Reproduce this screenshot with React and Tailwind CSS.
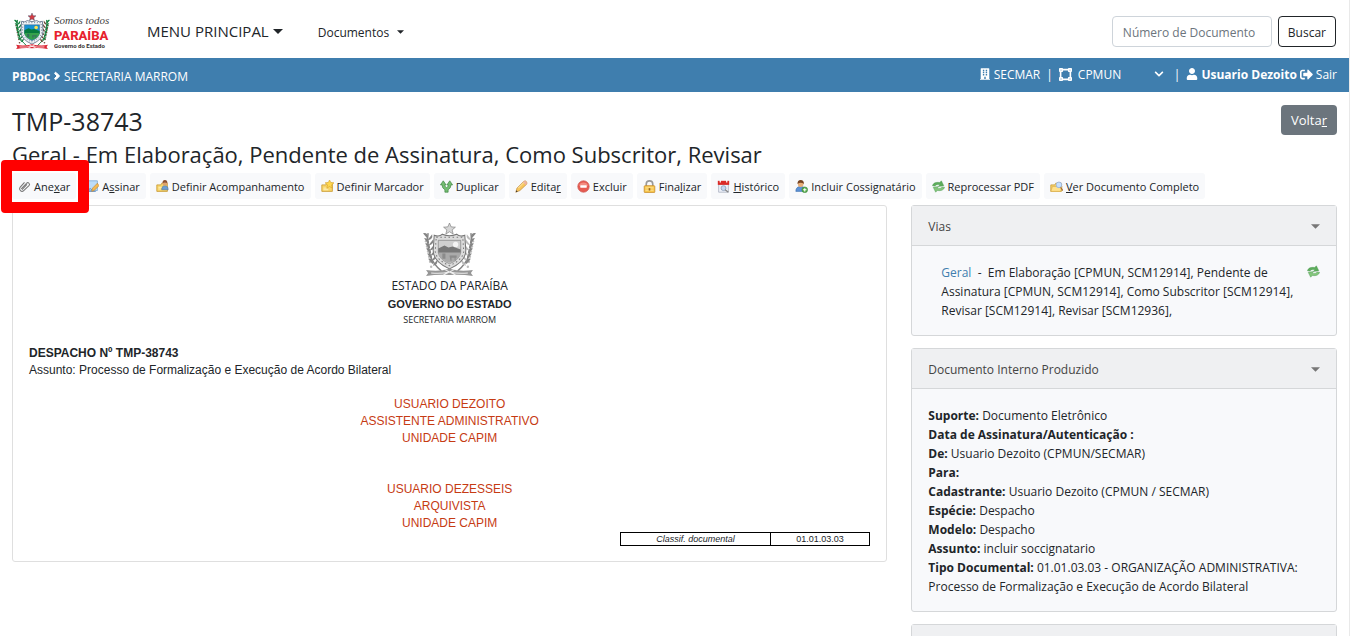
import React from 'react';
import { FaAngleRight, FaBuilding, FaChevronDown, FaSignOutAlt, FaUser, FaVectorSquare } from 'react-icons/fa';

// ---------- Coat of arms ----------
const Crest = ({ mono, className }) => {
  const c = mono
    ? { leaf: '#858585', leafAlt: '#bcbcbc', shield: '#dcdcdc', edge: '#777777', sky: '#cfcfcf', hill: '#777777', land: '#aaaaaa', sun: '#f4f4f4', ribbon: '#969696', star: '#d6d6d6' }
    : { leaf: '#16813f', leafAlt: '#6b4a38', shield: '#f1f5f7', edge: '#39506b', sky: '#1792d2', hill: '#067b3d', land: '#35a14c', sun: '#ffe24a', ribbon: '#db2835', star: '#d43b43' };
  const leaves = [15, 20, 25, 30, 35, 40];

  return (
    <svg viewBox="0 0 52 52" className={className} aria-hidden="true">
      {[false, true].map((flip) => (
        <g key={String(flip)} transform={flip ? 'translate(52 0) scale(-1 1)' : undefined}>
          <path d="M5 10C3 26 7 38 18 47" fill="none" stroke={c.leaf} strokeWidth="1.4" />
          {leaves.map((y, i) => (
            <g key={y}>
              <path d={`M${4 + i} ${y}l-4-5q5-1 5 5z`} fill={c.leaf} />
              <path d={`M${5 + i} ${y + 1}l4-5q1 5-4 6z`} fill={flip ? c.leafAlt : c.leaf} />
              <circle cx={3 + i} cy={y + 3} r="1.2" fill={c.leafAlt} />
            </g>
          ))}
        </g>
      ))}
      <path d="M11 12q5 2 8-1 7 3 14 0 3 3 8 1l1 15q0 11-16 18Q10 38 10 27z" fill={c.shield} stroke={c.edge} strokeWidth="1" />
      <path d="M13 14h26l1 14q-1 8-14 14-13-6-14-14z" fill="none" stroke={c.edge} strokeWidth="1" strokeDasharray="1.5 2.5" />
      <path d="M15 17h22v12q-1 7-11 11-10-4-11-11z" fill={c.sky} stroke={c.edge} strokeWidth=".6" />
      <circle cx="32" cy="21" r="2.6" fill={c.sun} />
      <path d="M15 25l6-3 4 2 4-1 8 3v4H15z" fill={c.hill} />
      <path d="M15 29h22q-1 7-11 10-10-3-11-10z" fill={c.land} />
      <path d="M19 30h3v5h-3zm7 2h7v2h-1v3h-1v-3h-3v3h-1z" fill={c.edge} opacity=".6" />
      <path d="M26 0l1.6 3.8 4.2.3-3.2 2.7 1 4-3.6-2.2-3.6 2.2 1-4-3.2-2.7 4.2-.3z" fill={c.star} stroke={c.edge} strokeWidth=".6" />
      <path d="M3 46q12 2 23-1 11 3 23 1l-2 3 2 3q-12-2-23-1-11-1-23 1l2-3z" fill={c.ribbon} />
      <path d="M8 49q10 1 18-1 8 2 18 1M20 45l12 6M32 45l-12 6" fill="none" stroke={mono ? '#eeeeee' : '#ffffff'} strokeWidth="1" />
    </svg>
  );
};

const Brand = () => (
  <a href="#inicio" className="flex items-center gap-1" aria-label="Governo do Estado da Paraíba">
    <Crest className="h-9 w-9" />
    <svg viewBox="0 0 58 38" className="h-[38px] w-[58px]">
      <text x="0" y="12" fontFamily="'Liberation Serif', serif" fontStyle="italic" fontSize="11" fill="#444444">Somos todos</text>
      <text x="0" y="28" fontFamily="Roboto, sans-serif" fontWeight="800" fontSize="13" fill="#e7222e">PARAÍBA</text>
      <text x="0" y="36" fontFamily="Roboto, sans-serif" fontWeight="700" fontSize="6" fill="#333333">Governo do Estado</text>
    </svg>
  </a>
);

// ---------- Toolbar icons ----------
const Folder = () => (
  <path d="M1 6h5l1-2h7v10H1z" fill="#f8d468" stroke="#c79a35" />
);

const RefreshArrow = ({ fill, transform }) => (
  <path d="M.5 7Q2 2 9.500 3L11.500 1 14.500 7 8 8 9.500 5.800Q5 4.800 3.800 7.500z" fill={fill} stroke="#43914a" strokeWidth=".5" transform={transform} />
);

const shapes = {
  clip: <path d="M4 11l6.500-7q1.500-1.500 3 0t0 3L7 13q-2 2-4 0t-.5-4L8 3M5 12l6-6.500" fill="none" stroke="#777777" strokeWidth="1.300" />,
  sign: (
    <>
      <path d="M2 1h12v12H1z" fill="#bcdcf8" stroke="#7ba8d4" />
      <path d="M2 12q4-3 6 1M1 14h11" stroke="#447bbd" fill="none" />
      <path d="M8 10l6-6 2 3-6 6-3 1z" fill="#f5b951" stroke="#b8802c" strokeWidth=".7" />
    </>
  ),
  follow: (
    <>
      <Folder />
      <path d="M7 12q0-5 4-5t4 5z" fill="#6d9ed2" stroke="#43699b" strokeWidth=".6" />
      <circle cx="11" cy="4" r="3" fill="#dfa36d" />
      <path d="M8 4q0-4 3-4t3 4q-3-2-6 0z" fill="#8c5131" />
      <path d="M3 9h4M3 11h3" stroke="#fff6cc" />
    </>
  ),
  marker: (
    <>
      <Folder />
      <path d="M10.500 0l1.500 3 4 .5-3 2.500 1 4-3.500-2L7 10l1-4-3-2.500L9 3z" fill="#ffd84e" stroke="#d19b28" strokeWidth=".7" />
      <path d="M3 10h4M3 12h6" stroke="#fff6cc" />
    </>
  ),
  fork: (
    <path d="M6 15v-3Q2.500 10 2.500 6H.5L4 1l3.500 5H5.800q0 2 2.200 3.500Q10.200 8 10.200 6H8.500L12 1l3.500 5h-2q0 4-3.500 6v3z" fill="#74bd72" stroke="#39813e" strokeWidth=".8" />
  ),
  pencil: (
    <>
      <path d="M1 15l1.500-5L11 1.500q2-1 3 .5t.5 3L6 13z" fill="#f8c75d" stroke="#bd812c" strokeWidth=".8" />
      <path d="M11 1.500q2-1 3 .5t.5 3l-1.500 1-3.500-3.500z" fill="#edb2a1" />
      <path d="M1 15l.8-2.500 1.500 1.500z" fill="#333333" />
      <path d="M4 10l7-7" stroke="#fff0bd" />
    </>
  ),
  remove: (
    <>
      <circle cx="8" cy="8" r="7" fill="#e65a50" stroke="#d0605a" />
      <path d="M2.500 7q1-4 5.500-4t5.500 4z" fill="#f38c80" />
      <rect x="4" y="6.500" width="8" height="3" rx=".5" fill="#ffffff" />
    </>
  ),
  lock: (
    <>
      <path d="M4 8V5q0-4 4-4t4 4v3" fill="none" stroke="#999999" strokeWidth="2" />
      <rect x="1.500" y="7" width="13" height="8.500" rx="1" fill="#f6c448" stroke="#c98d2b" />
      <path d="M3 9h10M3 11h10M3 13h10" stroke="#ffe292" />
      <path d="M8 10v3" stroke="#94681f" strokeWidth="2" />
    </>
  ),
  history: (
    <>
      <path d="M2 5h12v10H2z" fill="#eef1f8" stroke="#adb3c2" />
      <path d="M1 1h14v5H1z" fill="#da2a27" />
      <path d="M4 0v3M12 0v3" stroke="#ffffff" strokeWidth="1.500" />
      <circle cx="8" cy="10" r="3" fill="#c6d8f0" stroke="#8b9db8" />
      <path d="M10 12l4 3" stroke="#858585" strokeWidth="1.500" />
    </>
  ),
  addUser: (
    <>
      <path d="M1 14q0-6 6-6t6 6z" fill="#5c91d5" stroke="#356aaa" strokeWidth=".7" />
      <circle cx="7" cy="5" r="3.500" fill="#e7ae79" />
      <path d="M3 5q0-5 4-5t4 5Q7 2 3 5z" fill="#774423" />
      <circle cx="12" cy="12" r="3.500" fill="#58ac4c" stroke="#36813a" strokeWidth=".7" />
      <path d="M10 12h4M12 10v4" stroke="#ffffff" strokeWidth="1.300" />
    </>
  ),
  refresh: (
    <>
      <RefreshArrow fill="#5dad5b" />
      <RefreshArrow fill="#84c67b" transform="rotate(180 8 8)" />
    </>
  ),
  search: (
    <>
      <Folder />
      <path d="M3 8h12l-2 6H1z" fill="#ffe18b" stroke="#d5a948" strokeWidth=".7" />
      <circle cx="11" cy="6" r="3.500" fill="#c4dfff" stroke="#96aed0" />
      <path d="M13 9l3 4" stroke="#a56e30" strokeWidth="1.500" />
    </>
  ),
};

const Icon = ({ name }) => (
  <svg viewBox="0 0 16 16" className="h-[13px] w-[13px] shrink-0" aria-hidden="true">
    {shapes[name]}
  </svg>
);

const Caret = ({ className }) => (
  <svg viewBox="0 0 10 5" className={className} aria-hidden="true">
    <path d="M0 0h10L5 5z" fill="currentColor" />
  </svg>
);

// Each label is split around its access key
const actions = [
  { icon: 'clip', label: ['Ane', 'x', 'ar'], highlighted: true },
  { icon: 'sign', label: ['A', 's', 'sinar'] },
  { icon: 'follow', label: ['Definir Acompanhamento'] },
  { icon: 'marker', label: ['Definir Marcador'] },
  { icon: 'fork', label: ['Duplicar'] },
  { icon: 'pencil', label: ['Edita', 'r', ''] },
  { icon: 'remove', label: ['Excluir'] },
  { icon: 'lock', label: ['Fina', 'l', 'izar'] },
  { icon: 'history', label: ['', 'H', 'istórico'] },
  { icon: 'addUser', label: ['Incluir Cossignatário'] },
  { icon: 'refresh', label: ['Reprocessar PDF'] },
  { icon: 'search', label: ['', 'V', 'er Documento Completo'] },
];

const details = [
  ['Suporte:', 'Documento Eletrônico'],
  ['Data de Assinatura/Autenticação :', ''],
  ['De:', 'Usuario Dezoito (CPMUN/SECMAR)'],
  ['Para:', ''],
  ['Cadastrante:', 'Usuario Dezoito (CPMUN / SECMAR)'],
  ['Espécie:', 'Despacho'],
  ['Modelo:', 'Despacho'],
  ['Assunto:', 'incluir soccignatario'],
  ['Tipo Documental:', '01.01.03.03 - ORGANIZAÇÃO ADMINISTRATIVA: Processo de Formalização e Execução de Acordo Bilateral'],
];

const signers = [
  ['USUARIO DEZOITO', 'ASSISTENTE ADMINISTRATIVO', 'UNIDADE CAPIM'],
  ['USUARIO DEZESSEIS', 'ARQUIVISTA', 'UNIDADE CAPIM'],
];

const Panel = ({ title, children }) => (
  <section className="mb-3 rounded-[3px] border border-[#d5d7d9] bg-[#f8f9fb]">
    <h3>
      <button type="button" className="flex h-10 w-full items-center justify-between border-b border-[#d5d7d9] bg-[#eff0f2] px-4 pt-0.5 text-[#444444]">
        {title}
        <Caret className="h-[5px] w-[9px] text-[#777777]" />
      </button>
    </h3>
    <div className="px-4 pt-[17px] pb-[15px]">{children}</div>
  </section>
);

const App = () => {
  return (
    <div className="h-screen overflow-hidden border-r border-[#e9e9e9] bg-white font-['Open_Sans','Noto_Sans',sans-serif] text-[12px] leading-[19px] text-[#212529]">
      <nav className="flex h-[58px] items-center pr-[13px] pl-3.5 pt-1">
        <Brand />
        <button type="button" className="ml-[35px] flex items-center gap-1 text-[15px]">
          MENU PRINCIPAL
          <Caret className="h-[5px] w-2.5" />
        </button>
        <button type="button" className="ml-[35px] flex items-center gap-2 pt-0.5">
          Documentos
          <Caret className="h-1 w-[7px]" />
        </button>
        <form className="ml-auto flex gap-1.5" onSubmit={(e) => e.preventDefault()}>
          <input
            type="text"
            aria-label="Número de Documento"
            placeholder="Número de Documento"
            className="h-[31px] w-40 rounded border border-[#ced4da] px-2.5 pt-0.5 placeholder:text-[#6c757d]"
          />
          <button type="submit" className="h-[31px] rounded border border-[#212529] px-[9px] pt-0.5">Buscar</button>
        </form>
      </nav>

      <div className="flex h-[34px] items-center justify-between bg-[#3f7eae] px-3 text-white">
        <div className="flex items-center gap-1 pt-0.5">
          <strong>PBDoc</strong>
          <FaAngleRight className="h-3 w-1.5" strokeWidth="40" stroke="currentColor" />
          <span>SECRETARIA MARROM</span>
        </div>
        <div className="flex items-center pb-0.5">
          <FaBuilding className="mr-1 h-3 w-2.5" />
          SECMAR
          <span className="mx-1.5">|</span>
          <FaVectorSquare className="h-[13px] w-[13px]" />
          <div className="relative ml-1.5 mr-2.5 flex items-center">
            <select aria-label="Lotação" className="w-[86px] appearance-none bg-transparent" defaultValue="CPMUN">
              <option>CPMUN</option>
            </select>
            <FaChevronDown className="pointer-events-none absolute right-0 h-2.5 w-2.5" />
          </div>
          <span className="mr-1.5">|</span>
          <FaUser className="mr-[3px] h-3 w-3" />
          <strong>Usuario Dezoito</strong>
          <a href="#sair" className="ml-[3px] flex items-center gap-[3px]">
            <FaSignOutAlt className="h-[13px] w-[13px]" />
            Sair
          </a>
        </div>
      </div>

      <main className="px-3 pt-[13px]">
        <header className="flex items-start justify-between">
          <div>
            <h1 className="text-[25px] leading-[33px] font-medium">TMP-38743</h1>
            <h2 className="text-[22px] leading-[33px] font-medium">
              Geral - Em Elaboração, Pendente de Assinatura, Como Subscritor, Revisar
            </h2>
          </div>
          <button type="button" className="h-[30px] rounded bg-[#6c757d] px-2.5 text-[13px] text-white">
            Volta<u>r</u>
          </button>
        </header>

        <div className="mt-0.5 flex gap-1 text-[11px]">
          {actions.map(({ icon, label, highlighted }) => (
            <div key={icon} className="relative shrink-0">
              <a href={`#${icon}`} className="flex h-[26px] items-center gap-[3px] rounded-[3px] bg-[#f8f9fb] px-1.5">
                <Icon name={icon} />
                <span>
                  {label[0]}
                  {label[1] && <u>{label[1]}</u>}
                  {label[2]}
                </span>
              </a>
              {highlighted && (
                <span className="pointer-events-none absolute -top-[13px] -left-[11px] z-10 h-[53px] w-[88px] rounded border-[11px] border-[#ff0000]" />
              )}
            </div>
          ))}
        </div>

        <div className="-mx-3 mt-1.5 flex items-start">
          <div className="w-2/3 px-3">
            <article className="rounded-[3px] border border-[#dfdfdf] px-4 pt-4 pb-[15px] font-['Liberation_Sans',sans-serif] leading-[17px]">
              <div className="flex flex-col items-center">
                <Crest mono className="mt-px h-[53px] w-[53px]" />
                <p className="mt-px font-['Open_Sans',sans-serif]">ESTADO DA PARAÍBA</p>
                <p className="mt-0.5 text-[11px] font-bold">GOVERNO DO ESTADO</p>
                <p className="font-['Open_Sans',sans-serif] text-[9px] leading-[13px]">SECRETARIA MARROM</p>
              </div>
              <p className="mt-[19px] font-bold">DESPACHO Nº TMP-38743</p>
              <p>Assunto: Processo de Formalização e Execução de Acordo Bilateral</p>
              <div className="mt-[17px] flex flex-col gap-[34px] text-center text-[#c63b13]">
                {signers.map((lines) => (
                  <div key={lines[0]}>
                    {lines.map((line) => (
                      <p key={line}>{line}</p>
                    ))}
                  </div>
                ))}
              </div>
              <table className="ml-auto w-[250px] table-fixed border-collapse text-center text-[9px] leading-[12px]">
                <tbody>
                  <tr>
                    <td className="w-3/5 border border-black p-0 italic">Classif. documental</td>
                    <td className="border border-black p-0">01.01.03.03</td>
                  </tr>
                </tbody>
              </table>
            </article>
          </div>

          <aside className="w-1/3 px-3">
            <Panel title="Vias">
              <div className="flex items-start pl-[13px]">
                <p className="flex-1">
                  <a href="#geral" className="text-[#3f7eae]">Geral</a>
                  &nbsp; - &nbsp;Em Elaboração [CPMUN, SCM12914], Pendente de Assinatura [CPMUN, SCM12914], Como Subscritor [SCM12914], Revisar [SCM12914], Revisar [SCM12936],
                </p>
                <a href="#atualizar" aria-label="Reprocessar" className="pt-0.5">
                  <Icon name="refresh" />
                </a>
              </div>
            </Panel>
            <Panel title="Documento Interno Produzido">
              {details.map(([label, value]) => (
                <p key={label}>
                  <b>{label}</b> {value}
                </p>
              ))}
            </Panel>
            <Panel title="">
              <p />
            </Panel>
          </aside>
        </div>
      </main>
    </div>
  );
};

export default App;
